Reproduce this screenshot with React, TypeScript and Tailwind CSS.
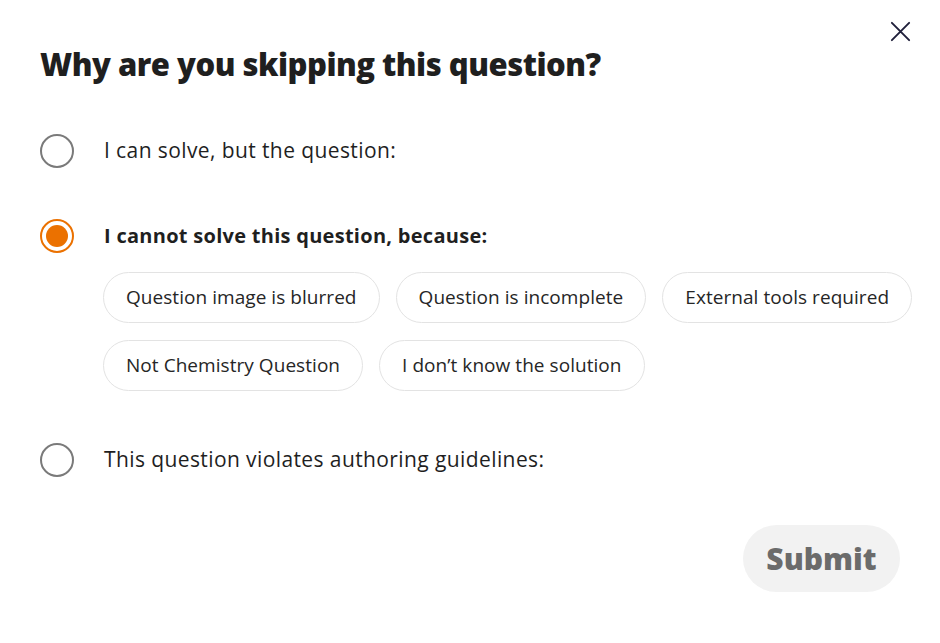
import { useState } from "react";

const reasons = [
  "Question image is blurred",
  "Question is incomplete",
  "External tools required",
  "Not Chemistry Question",
  "I don’t know the solution",
];

const Radio = ({ checked }: { checked: boolean }) => (
  <span
    className={`flex h-[34px] w-[34px] shrink-0 items-center justify-center rounded-full border-[2.5px] ${
      checked ? "border-[#eb7100]" : "border-[#7a7a7a]"
    }`}
  >
    {checked && <span className="h-[22px] w-[22px] rounded-full bg-[#eb7100]" />}
  </span>
);

export default function App() {
  const [choice, setChoice] = useState(1);

  return (
    <div className="relative h-[643px] w-[940px] bg-white font-['Open_Sans',sans-serif] text-[#1f1f1f]">
      <button className="absolute right-[28px] top-[20px] text-[#1f1f3a]" aria-label="Close">
        <svg width="23" height="23" viewBox="0 0 24 24" fill="none" stroke="currentColor" strokeWidth="2" strokeLinecap="round">
          <path d="M3 3l18 18M21 3L3 21" />
        </svg>
      </button>

      <div className="px-10 pt-[42px]">
        <h1 className="text-[31px] font-extrabold leading-[44px] tracking-[-0.5px]">
          Why are you skipping this question?
        </h1>

        <div className="mt-[48px] flex flex-col">
          <label className="flex cursor-pointer items-center gap-[30px]" onClick={() => setChoice(0)}>
            <Radio checked={choice === 0} />
            <span className="text-[21px] tracking-[0.4px]">I can solve, but the question:</span>
          </label>

          <label className="mt-[51px] flex cursor-pointer items-center gap-[30px]" onClick={() => setChoice(1)}>
            <Radio checked={choice === 1} />
            <span className="text-[20px] font-bold tracking-[0.28px]">I cannot solve this question, because:</span>
          </label>

          <div className="ml-[63px] mt-[19px] flex w-[820px] flex-wrap gap-x-4 gap-y-[17px]">
            {reasons.map((r) => (
              <button
                key={r}
                className="h-[51px] rounded-full border border-[#e3e3e3] px-[22px] text-[19px] tracking-[0.05px] text-[#262626]"
              >
                {r}
              </button>
            ))}
          </div>

          <label className="mt-[52px] flex cursor-pointer items-center gap-[30px]" onClick={() => setChoice(2)}>
            <Radio checked={choice === 2} />
            <span className="text-[21px] tracking-[0.4px]">This question violates authoring guidelines:</span>
          </label>
        </div>

        <div className="mt-[48px] flex justify-end">
          <button className="h-[67px] w-[157px] rounded-full bg-[#f2f2f2] text-[30px] font-extrabold text-[#6b6b6b]">
            Submit
          </button>
        </div>
      </div>
    </div>
  );
}
